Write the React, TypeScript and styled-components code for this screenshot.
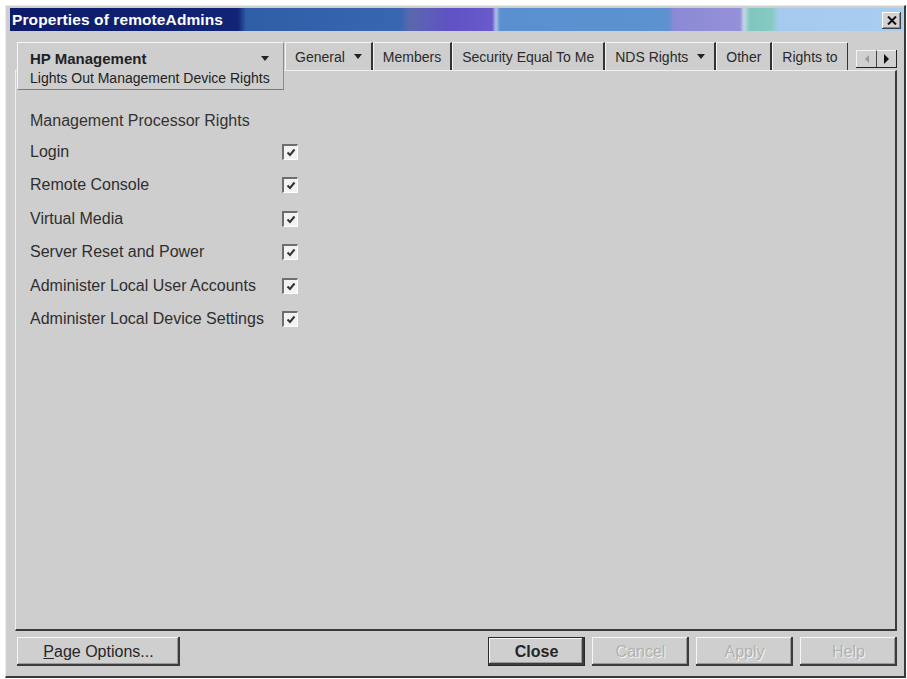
import React from "react";
import styled, { createGlobalStyle } from "styled-components";

const GlobalStyle = createGlobalStyle`
  html, body {
    margin: 0;
    padding: 0;
    background: #ffffff;
  }
  body {
    font-family: "Liberation Sans", Arial, sans-serif;
    color: #2a2a2a;
  }
  * {
    box-sizing: border-box;
  }
`;

const rights = [
  "Login",
  "Remote Console",
  "Virtual Media",
  "Server Reset and Power",
  "Administer Local User Accounts",
  "Administer Local Device Settings",
];

const tabs = [
  { label: "General", menu: true },
  { label: "Members", menu: false },
  { label: "Security Equal To Me", menu: false },
  { label: "NDS Rights", menu: true },
  { label: "Other", menu: false },
  { label: "Rights to", menu: false },
];

export default function App() {
  return (
    <>
      <GlobalStyle />
      <Window>
        <TitleBar>
          <Title>Properties of remoteAdmins</Title>
          <CloseBox>
            <svg width="10" height="9" viewBox="0 0 10 9">
              <path d="M1 0.5 L9 8.5 M9 0.5 L1 8.5" stroke="#111" strokeWidth="2" />
            </svg>
          </CloseBox>
        </TitleBar>
        <Body>
          <TabStrip>
            <ActiveTab>
              <ActiveTabTop>
                <span>HP Management</span>
                <DropArrow />
              </ActiveTabTop>
              <ActiveTabSub>Lights Out Management Device Rights</ActiveTabSub>
            </ActiveTab>
            <TabScroller>
              {tabs.map((t) => (
                <Tab key={t.label}>
                  {t.label}
                  {t.menu && <DropArrow $gap={9} />}
                </Tab>
              ))}
            </TabScroller>
            <ScrollButtons>
              <ScrollButton>
                <ArrowLeft $disabled />
              </ScrollButton>
              <ScrollButton>
                <ArrowRight />
              </ScrollButton>
            </ScrollButtons>
          </TabStrip>
          <Panel>
            <SectionTitle>Management Processor Rights</SectionTitle>
            <RightsGrid>
              {rights.map((r) => (
                <React.Fragment key={r}>
                  <RightLabel>{r}</RightLabel>
                  <CheckBox>
                    <svg width="10" height="9" viewBox="0 0 10 9">
                      <path
                        d="M1.5 4.5 L4 7 L8.5 1.5"
                        stroke="#333"
                        strokeWidth="2"
                        fill="none"
                      />
                    </svg>
                  </CheckBox>
                </React.Fragment>
              ))}
            </RightsGrid>
          </Panel>
          <Footer>
            <Button $width={163}>
              <u>P</u>age Options...
            </Button>
            <Spacer />
            <ButtonGroup>
              <Button $width={97} $default>
                Close
              </Button>
              <Button $width={97} $disabled>
                Cancel
              </Button>
              <Button $width={97} $disabled>
                Apply
              </Button>
              <Button $width={97} $disabled>
                Help
              </Button>
            </ButtonGroup>
          </Footer>
        </Body>
      </Window>
    </>
  );
}

const Window = styled.div`
  margin: 5px 0 0 5px;
  width: 901px;
  height: 673px;
  background: #cecece;
  border-top: 1px solid #ececec;
  border-left: 1px solid #ececec;
  border-right: 2px solid #3a3a3a;
  border-bottom: 2px solid #3a3a3a;
  padding: 2px 1px 0 4px;
  display: flex;
  flex-direction: column;
`;

const TitleBar = styled.div`
  height: 23px;
  flex-shrink: 0;
  display: flex;
  align-items: center;
  justify-content: space-between;
  padding: 0 2px 0 2px;
  background: linear-gradient(
    90deg,
    #0d1b69 0px,
    #112476 228px,
    #2f5da6 236px,
    #3866b0 390px,
    #5a68ae 400px,
    #6052c4 440px,
    #6a5acb 482px,
    #b0c0e4 486px,
    #5a90d0 490px,
    #5c92cf 658px,
    #8c8ad6 664px,
    #9590d8 730px,
    #c4d8e8 734px,
    #80c6bc 740px,
    #86cbc2 762px,
    #a6caee 768px,
    #a9cdf0 100%
  );
`;

const Title = styled.div`
  color: #ffffff;
  font-weight: bold;
  font-size: 15.5px;
  letter-spacing: 0.1px;
  line-height: 23px;
`;

const CloseBox = styled.div`
  width: 19px;
  height: 17px;
  margin-top: 1px;
  display: flex;
  align-items: center;
  justify-content: center;
  background: #d2d2d2;
  box-shadow: inset -1px -1px #404040, inset 1px 1px #ffffff,
    inset -2px -2px #8a8a8a;
`;

const Body = styled.div`
  flex: 1;
  display: flex;
  flex-direction: column;
  padding: 11px 6px 0 5px;
  min-height: 0;
`;

const TabStrip = styled.div`
  height: 28px;
  flex-shrink: 0;
  display: flex;
  align-items: flex-start;
  padding-left: 2px;
`;

const ActiveTab = styled.div`
  position: relative;
  z-index: 1;
  width: 267px;
  height: 48px;
  flex-shrink: 0;
  background: #cecece;
  border-top: 1px solid #f6f6f6;
  border-left: 1px solid #f6f6f6;
  border-right: 1px solid #8c8c8c;
  border-bottom: 1px solid #7a7a7a;
  padding: 6px 14px 0 12px;
  font-size: 14px;
  color: #222;
`;

const ActiveTabTop = styled.div`
  height: 18px;
  display: flex;
  align-items: center;
  justify-content: space-between;
  font-weight: bold;
  font-size: 15px;
`;

const ActiveTabSub = styled.div`
  height: 18px;
  margin-top: 2px;
  line-height: 18px;
  white-space: nowrap;
`;

const DropArrow = styled.span<{ $gap?: number }>`
  display: inline-block;
  width: 0;
  height: 0;
  margin-left: ${(p) => p.$gap ?? 0}px;
  border-left: 4px solid transparent;
  border-right: 4px solid transparent;
  border-top: 5px solid #222;
`;

const TabScroller = styled.div`
  flex: 1;
  height: 28px;
  overflow: hidden;
  display: flex;
  margin-left: 1px;
`;

const Tab = styled.div`
  flex-shrink: 0;
  height: 28px;
  display: flex;
  align-items: center;
  padding: 0 9px;
  font-size: 14px;
  color: #2a2a2a;
  white-space: nowrap;
  border-top: 1px solid #f4f4f4;
  border-left: 1px solid #f4f4f4;
  border-right: 2px solid #333333;
`;

const ScrollButtons = styled.div`
  display: flex;
  margin: 8px 0 0 8px;
  height: 18px;
  border-right: 1px solid #222;
  border-bottom: 1px solid #222;
`;

const ScrollButton = styled.div`
  width: 20px;
  height: 17px;
  display: flex;
  align-items: center;
  justify-content: center;
  background: #d0d0d0;
  border-top: 1px solid #f4f4f4;
  border-left: 1px solid #f4f4f4;
  & + & {
    border-left: 1px solid #444;
  }
`;

const ArrowLeft = styled.span<{ $disabled?: boolean }>`
  width: 0;
  height: 0;
  border-top: 4px solid transparent;
  border-bottom: 4px solid transparent;
  border-right: 4px solid ${(p) => (p.$disabled ? "#9a9a9a" : "#111")};
`;

const ArrowRight = styled.span`
  width: 0;
  height: 0;
  border-top: 5px solid transparent;
  border-bottom: 5px solid transparent;
  border-left: 5px solid #111;
`;

const Panel = styled.div`
  flex: 1;
  min-height: 0;
  border-top: 1px solid #f0f0f0;
  border-left: 1px solid #f0f0f0;
  border-right: 2px solid #3a3a3a;
  border-bottom: 2px solid #3a3a3a;
  padding: 41px 0 0 14px;
`;

const SectionTitle = styled.div`
  font-size: 16px;
  line-height: 18px;
  color: #333;
`;

const RightsGrid = styled.div`
  margin-top: 5px;
  display: grid;
  grid-template-columns: 252px 16px;
  grid-auto-rows: 33.5px;
  align-items: center;
`;

const RightLabel = styled.div`
  font-size: 16px;
  line-height: 18px;
  color: #2e2e2e;
  white-space: nowrap;
`;

const CheckBox = styled.div`
  width: 16px;
  height: 16px;
  display: flex;
  align-items: center;
  justify-content: center;
  background: #f2f2f2;
  border-top: 2px solid #6e6e6e;
  border-left: 2px solid #6e6e6e;
  border-right: 1px solid #ffffff;
  border-bottom: 1px solid #ffffff;
`;

const Footer = styled.div`
  height: 45px;
  flex-shrink: 0;
  display: flex;
  align-items: flex-start;
  padding: 6px 0 0 2px;
`;

const Spacer = styled.div`
  flex: 1;
`;

const ButtonGroup = styled.div`
  display: flex;
  gap: 7px;
`;

const Button = styled.div<{
  $width: number;
  $default?: boolean;
  $disabled?: boolean;
}>`
  width: ${(p) => p.$width}px;
  height: 29px;
  display: flex;
  align-items: center;
  justify-content: center;
  font-size: 16px;
  background: #cfcfcf;
  color: ${(p) => (p.$disabled ? "#b0b0b0" : "#262626")};
  text-shadow: ${(p) => (p.$disabled ? "1px 1px 0 #f4f4f4" : "none")};
  font-weight: ${(p) => (p.$default ? "bold" : "normal")};
  border: ${(p) => (p.$default ? "1px solid #2a2a2a" : "none")};
  box-shadow: inset -2px -2px #3c3c3c, inset 1px 1px #f6f6f6,
    inset -3px -3px #9a9a9a;
  u {
    text-decoration: underline;
  }
`;
